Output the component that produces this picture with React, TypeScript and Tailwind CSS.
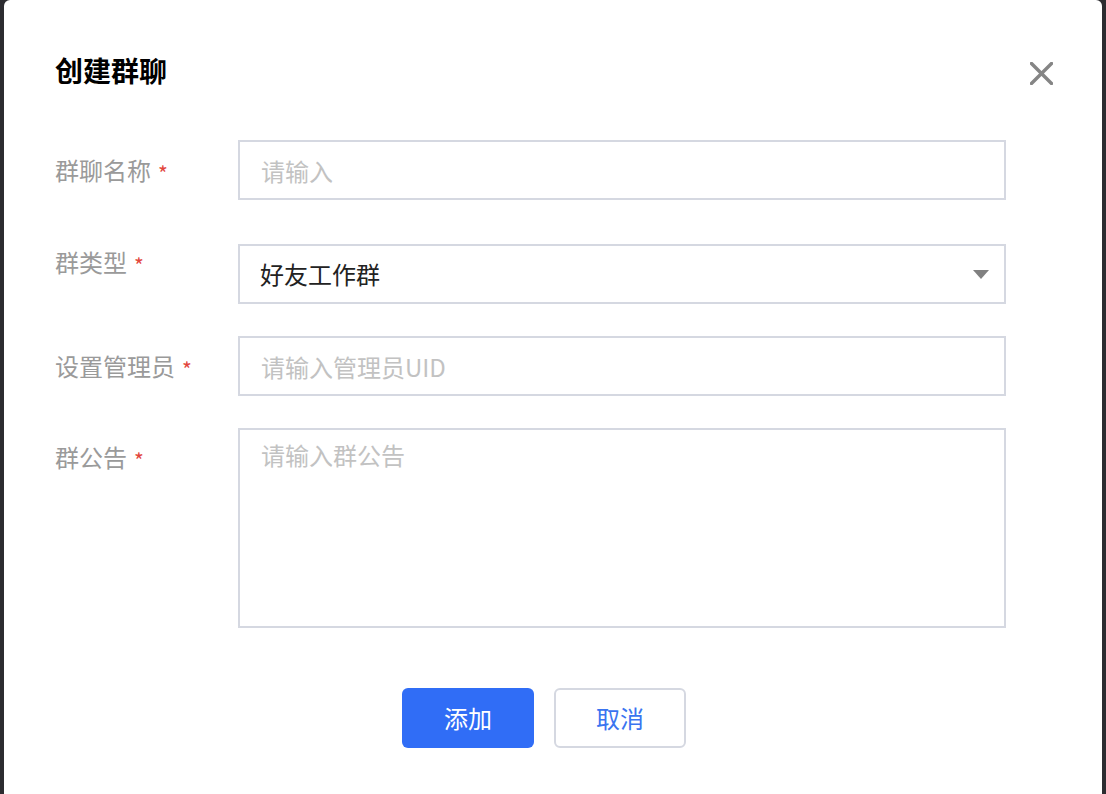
const font = { fontFamily: '"Noto Sans CJK SC", "Noto Sans", sans-serif' };

function Label({ text, className }: { text: string; className: string }) {
  return (
    <div className={`w-[183px] shrink-0 overflow-hidden text-[24px] text-[#9a9a9a] ${className}`}>
      {text}
      <span className="ml-[7px] inline-block align-middle text-[21px] leading-none text-[#e2463d]">*</span>
    </div>
  );
}

export default function App() {
  return (
    <div className="flex h-[794px] w-full bg-[#2c2c30] px-[4px]" style={font}>
      <div className="flex flex-1 flex-col rounded-t-[6px] bg-white pl-[51px] pr-[49px] pt-[50px]">
        <div className="flex items-start justify-between">
          <h1 className="text-[28px] font-bold leading-[40px] text-black">创建群聊</h1>
          <svg className="mt-[12px]" width="23" height="23" viewBox="0 0 23 23">
            <path d="M1.5 1.5 L21.5 21.5 M21.5 1.5 L1.5 21.5" stroke="#858585" strokeWidth="3.4" strokeLinecap="square" />
          </svg>
        </div>

        <div className="mt-[50px] flex h-[60px]">
          <Label text="群聊名称" className="h-[60px] leading-[60px]" />
          <input
            placeholder="请输入"
            className="h-[60px] w-[768px] border-2 border-[#d5d8e1] pl-[21px] text-[24px] text-[#222] outline-none placeholder:text-[#c2c2c2]"
          />
        </div>

        <div className="mt-[44px] flex h-[60px]">
          <Label text="群类型" className="h-[36px] leading-[36px]" />
          <div className="flex h-[60px] w-[768px] items-center justify-between border-2 border-[#d5d8e1] pl-[20px] pr-[15px]">
            <span className="text-[24px] text-[#222]">好友工作群</span>
            <svg width="16" height="9" viewBox="0 0 16 9">
              <path d="M0 0 H16 L8 9 Z" fill="#808080" />
            </svg>
          </div>
        </div>

        <div className="mt-[32px] flex h-[60px]">
          <Label text="设置管理员" className="h-[60px] leading-[60px]" />
          <input
            placeholder="请输入管理员UID"
            className="h-[60px] w-[768px] border-2 border-[#d5d8e1] pl-[21px] text-[24px] text-[#222] outline-none placeholder:text-[#c2c2c2]"
          />
        </div>

        <div className="mt-[32px] flex h-[200px]">
          <Label text="群公告" className="h-[58px] leading-[58px]" />
          <textarea
            placeholder="请输入群公告"
            className="h-[200px] w-[768px] resize-none border-2 border-[#d5d8e1] pl-[21px] pt-[7px] text-[24px] leading-[36px] text-[#222] outline-none placeholder:text-[#c2c2c2]"
          />
        </div>

        <div className="ml-[347px] mt-[60px] flex gap-[20px]">
          <button className="h-[60px] w-[132px] rounded-[6px] bg-[#306df6] text-[24px] text-white">添加</button>
          <button className="h-[60px] w-[132px] rounded-[6px] border-2 border-[#d5d8e1] bg-white text-[24px] text-[#3a74f0]">
            取消
          </button>
        </div>
      </div>
    </div>
  );
}
